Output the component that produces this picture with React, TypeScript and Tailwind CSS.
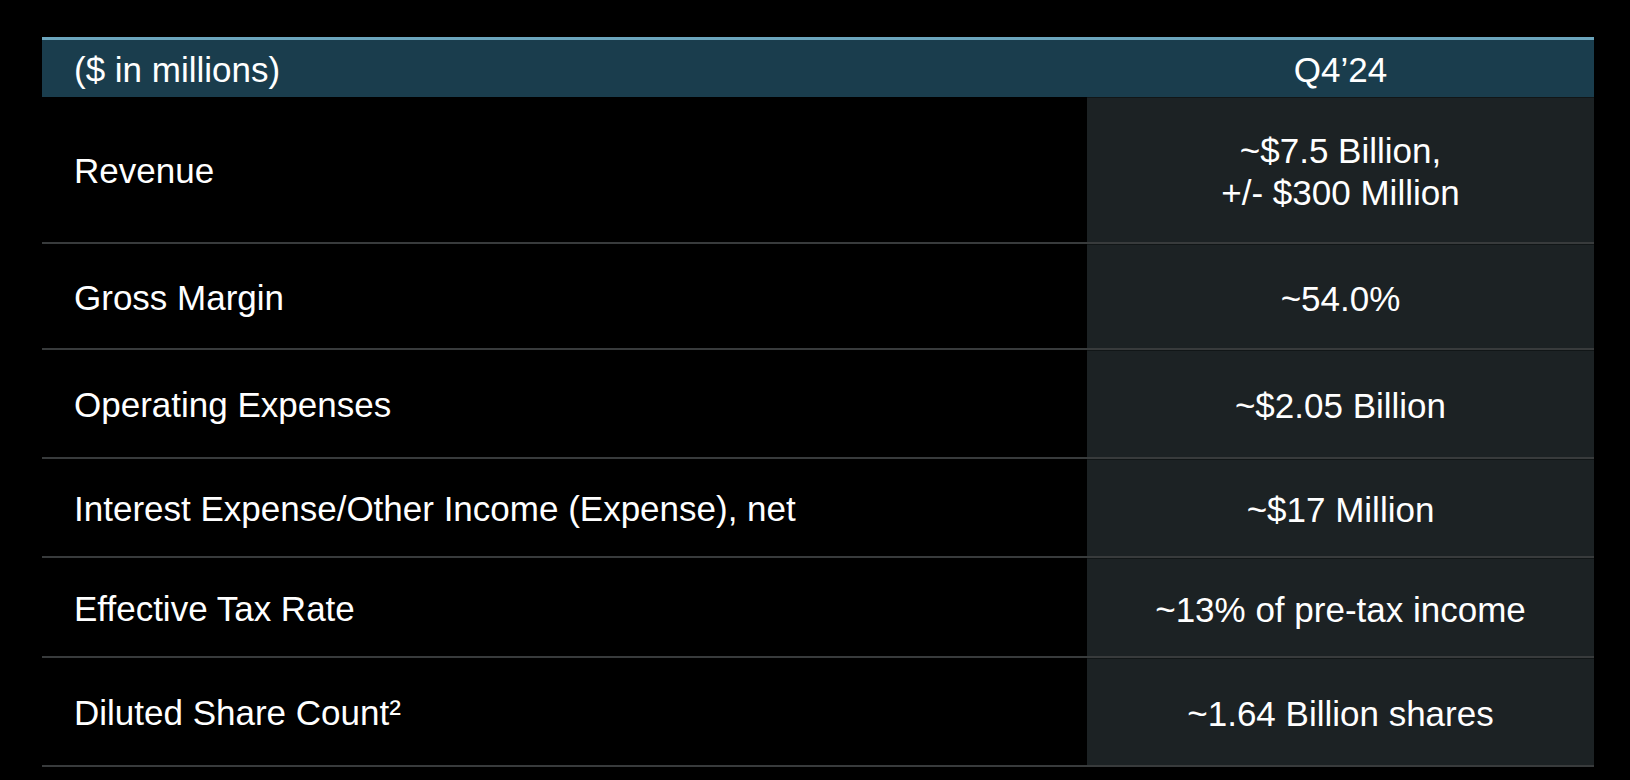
const rows: { label: string; value: string[]; h: string }[] = [
    { label: "Revenue", value: ["~$7.5 Billion,", "+/- $300 Million"], h: "h-[147px]" },
    { label: "Gross Margin", value: ["~54.0%"], h: "h-[106px]" },
    { label: "Operating Expenses", value: ["~$2.05 Billion"], h: "h-[109px]" },
    { label: "Interest Expense/Other Income (Expense), net", value: ["~$17 Million"], h: "h-[99px]" },
    { label: "Effective Tax Rate", value: ["~13% of pre-tax income"], h: "h-[100px]" },
    { label: "Diluted Share Count²", value: ["~1.64 Billion shares"], h: "h-[109px]" },
];

export default function App() {
    return (
        <div className="w-full h-[780px] bg-black pt-[37px] pl-[42px] text-white font-['Liberation_Sans',Arial,sans-serif]">
            <div className="w-[1552px]">
                <div className="grid grid-cols-[1045px_507px] h-[60px] bg-[#1a3d4d] border-t-[3px] border-[#6ba5bd]">
                    <div className="flex items-center pl-8 pt-[3px] text-[35px]">($ in millions)</div>
                    <div className="flex items-center justify-center pt-[3px] text-[35px]">Q4’24</div>
                </div>
                {rows.map((r) => (
                    <div
                        key={r.label}
                        className={`grid grid-cols-[1045px_507px] border-b-2 border-[#383b3c] ${r.h}`}
                    >
                        <div className="flex items-center pl-8 pt-1 text-[35px]">{r.label}</div>
                        <div className="flex flex-col items-center justify-center pt-1 bg-[#1c2224] border-t border-[#111617] text-[35px] leading-[42px] text-center">
                            {r.value.map((v) => (
                                <span key={v}>{v}</span>
                            ))}
                        </div>
                    </div>
                ))}
            </div>
        </div>
    );
}
